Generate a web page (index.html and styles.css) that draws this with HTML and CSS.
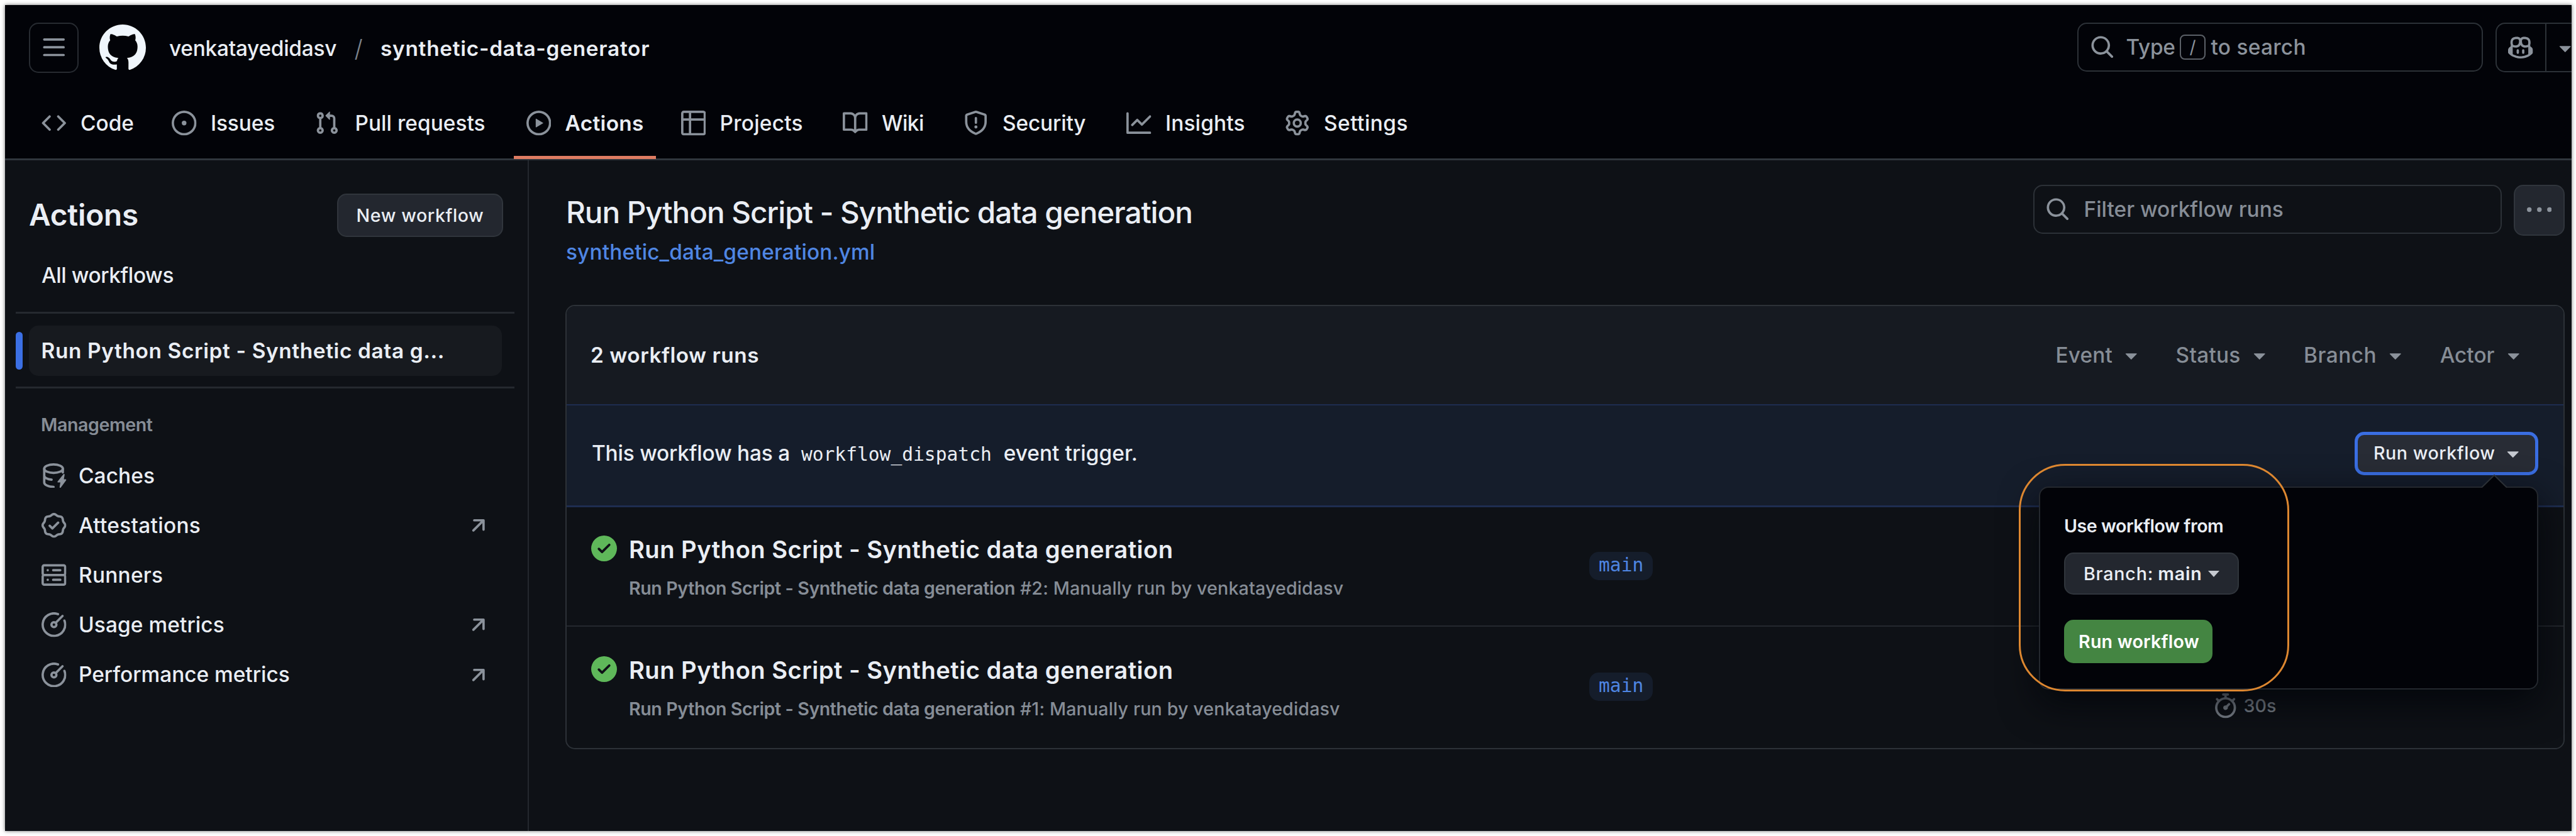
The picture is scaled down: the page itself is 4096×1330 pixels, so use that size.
FILE: index.html
```
<!DOCTYPE html>
<html lang="en">
<head>
<meta charset="utf-8">
<title>Workflow runs · venkatayedidasv/synthetic-data-generator</title>
<link rel="stylesheet" href="styles.css">
</head>
<body>
<svg class="sprite" aria-hidden="true">
  <symbol id="i-bars" viewBox="0 0 16 16"><path d="M1 2.75A.75.75 0 0 1 1.75 2h12.5a.75.75 0 0 1 0 1.5H1.75A.75.75 0 0 1 1 2.75Zm0 5A.75.75 0 0 1 1.75 7h12.5a.75.75 0 0 1 0 1.5H1.75A.75.75 0 0 1 1 7.75ZM1.75 12h12.5a.75.75 0 0 1 0 1.5H1.75a.75.75 0 0 1 0-1.5Z"/></symbol>
  <symbol id="i-mark" viewBox="0 0 16 16"><path d="M8 0c4.42 0 8 3.58 8 8a8.013 8.013 0 0 1-5.45 7.59c-.4.08-.55-.17-.55-.38 0-.27.01-1.13.01-2.2 0-.75-.25-1.23-.54-1.48 1.78-.2 3.65-.88 3.65-3.95 0-.88-.31-1.59-.82-2.15.08-.2.36-1.02-.08-2.12 0 0-.67-.22-2.2.82-.64-.18-1.32-.27-2-.27-.68 0-1.36.09-2 .27-1.53-1.03-2.2-.82-2.2-.82-.44 1.1-.16 1.92-.08 2.12-.51.56-.82 1.28-.82 2.15 0 3.06 1.86 3.75 3.64 3.95-.23.2-.44.55-.51 1.07-.46.21-1.61.55-2.33-.66-.15-.24-.6-.83-1.23-.82-.67.01-.27.38.01.53.34.19.73.9.82 1.13.16.45.68 1.31 2.69.94 0 .67.01 1.3.01 1.49 0 .21-.15.45-.55.38A7.995 7.995 0 0 1 0 8c0-4.42 3.58-8 8-8Z"/></symbol>
  <symbol id="i-search" viewBox="0 0 16 16"><path d="M10.68 11.74a6 6 0 0 1-7.922-8.982 6 6 0 0 1 8.982 7.922l3.04 3.04a.749.749 0 0 1-.326 1.275.749.749 0 0 1-.734-.215ZM11.5 7a4.499 4.499 0 1 0-8.997 0A4.499 4.499 0 0 0 11.5 7Z"/></symbol>
  <symbol id="i-copilot" viewBox="0 0 16 16"><path d="M7.998 15.035c-4.562 0-7.873-2.914-7.998-3.749V9.338c.085-.628.677-1.686 1.588-2.065.013-.07.024-.143.036-.218.029-.183.06-.384.126-.612-.201-.508-.254-1.084-.254-1.656 0-.87.128-1.769.693-2.484.579-.733 1.494-1.124 2.724-1.261 1.206-.134 2.262.034 2.944.765.05.053.096.108.139.165.044-.057.094-.112.143-.165.682-.731 1.738-.899 2.944-.765 1.23.137 2.145.528 2.724 1.261.566.715.693 1.614.693 2.484 0 .572-.053 1.148-.254 1.656.066.228.098.429.126.612.012.076.024.148.037.218.924.385 1.522 1.471 1.591 2.095v1.872c0 .766-3.351 3.795-8.002 3.795Zm0-1.485c2.28 0 4.584-1.11 5.002-1.433V7.862l-.023-.116c-.49.21-1.075.291-1.727.291-1.146 0-2.059-.327-2.71-.991A3.222 3.222 0 0 1 8 6.303a3.24 3.24 0 0 1-.544.743c-.65.664-1.563.991-2.71.991-.652 0-1.236-.081-1.727-.291l-.023.116v4.255c.419.323 2.722 1.433 5.002 1.433ZM6.762 2.83c-.193-.206-.637-.413-1.682-.297-1.019.113-1.479.404-1.713.7-.247.312-.369.789-.369 1.554 0 .793.129 1.171.308 1.371.162.181.519.379 1.442.379.853 0 1.339-.235 1.638-.54.315-.322.527-.827.617-1.553.117-.935-.037-1.395-.241-1.614Zm4.155-.297c-1.044-.116-1.488.091-1.681.297-.204.219-.359.679-.242 1.614.091.726.303 1.231.618 1.553.299.305.784.54 1.638.54.922 0 1.28-.198 1.442-.379.179-.2.308-.578.308-1.371 0-.765-.123-1.242-.37-1.554-.233-.296-.693-.587-1.713-.7ZM6.25 9.037a.75.75 0 0 1 .75.75v1.501a.75.75 0 0 1-1.5 0V9.787a.75.75 0 0 1 .75-.75Zm4.25.75v1.501a.75.75 0 0 1-1.5 0V9.787a.75.75 0 0 1 1.5 0Z"/></symbol>
  <symbol id="i-caret" viewBox="0 0 16 16"><path d="m4.427 7.427 3.396 3.396a.25.25 0 0 0 .354 0l3.396-3.396A.25.25 0 0 0 11.396 7H4.604a.25.25 0 0 0-.177.427Z"/></symbol>
  <symbol id="i-code" viewBox="0 0 16 16"><path d="m11.28 3.22 4.25 4.25a.75.75 0 0 1 0 1.06l-4.25 4.25a.749.749 0 0 1-1.275-.326.749.749 0 0 1 .215-.734L13.94 8l-3.72-3.72a.749.749 0 0 1 .326-1.275.749.749 0 0 1 .734.215Zm-6.56 0a.751.751 0 0 1 1.042.018.751.751 0 0 1 .018 1.042L2.06 8l3.72 3.72a.749.749 0 0 1-.326 1.275.749.749 0 0 1-.734-.215L.47 8.53a.75.75 0 0 1 0-1.06Z"/></symbol>
  <symbol id="i-issue" viewBox="0 0 16 16"><path d="M8 9.5a1.5 1.5 0 1 0 0-3 1.5 1.5 0 0 0 0 3Z"/><path d="M8 0a8 8 0 1 1 0 16A8 8 0 0 1 8 0ZM1.5 8a6.5 6.5 0 1 0 13 0 6.5 6.5 0 0 0-13 0Z"/></symbol>
  <symbol id="i-pull" viewBox="0 0 16 16"><path d="M1.5 3.25a2.25 2.25 0 1 1 3 2.122v5.256a2.251 2.251 0 1 1-1.5 0V5.372A2.25 2.25 0 0 1 1.5 3.25Zm5.677-.177L9.573.677A.25.25 0 0 1 10 .854V2.5h1A2.5 2.5 0 0 1 13.5 5v5.628a2.251 2.251 0 1 1-1.5 0V5a1 1 0 0 0-1-1h-1v1.646a.25.25 0 0 1-.427.177L7.177 3.427a.25.25 0 0 1 0-.354ZM3.75 2.5a.75.75 0 1 0 0 1.5.75.75 0 0 0 0-1.5Zm0 9.5a.75.75 0 1 0 0 1.5.75.75 0 0 0 0-1.5Zm8.25.75a.75.75 0 1 0 1.5 0 .75.75 0 0 0-1.5 0Z"/></symbol>
  <symbol id="i-play" viewBox="0 0 16 16"><path d="M8 0a8 8 0 1 1 0 16A8 8 0 0 1 8 0ZM1.5 8a6.5 6.5 0 1 0 13 0 6.5 6.5 0 0 0-13 0Zm4.879-2.773 4.264 2.559a.25.25 0 0 1 0 .428l-4.264 2.559A.25.25 0 0 1 6 10.559V5.442a.25.25 0 0 1 .379-.215Z"/></symbol>
  <symbol id="i-table" viewBox="0 0 16 16"><path d="M0 1.75C0 .784.784 0 1.75 0h12.5C15.216 0 16 .784 16 1.75v12.5A1.75 1.75 0 0 1 14.25 16H1.75A1.75 1.75 0 0 1 0 14.25ZM6.5 6.5v8h7.75a.25.25 0 0 0 .25-.25V6.5Zm8-1.5V1.75a.25.25 0 0 0-.25-.25H6.5V5Zm-13 1.5v7.75c0 .138.112.25.25.25H5v-8ZM5 5V1.5H1.75a.25.25 0 0 0-.25.25V5Z"/></symbol>
  <symbol id="i-book" viewBox="0 0 16 16"><path d="M0 1.75A.75.75 0 0 1 .75 1h4.253c1.227 0 2.317.59 3 1.501A3.743 3.743 0 0 1 11.006 1h4.245a.75.75 0 0 1 .75.75v10.5a.75.75 0 0 1-.75.75h-4.507a2.25 2.25 0 0 0-1.591.659l-.622.621a.75.75 0 0 1-1.06 0l-.622-.621A2.25 2.25 0 0 0 5.258 13H.75a.75.75 0 0 1-.75-.75Zm7.251 10.324.004-5.073-.002-2.253A2.25 2.25 0 0 0 5.003 2.5H1.5v9h3.757a3.75 3.75 0 0 1 1.994.574ZM8.755 4.75l-.004 7.322a3.752 3.752 0 0 1 1.992-.572H14.5v-9h-3.495a2.25 2.25 0 0 0-2.25 2.25Z"/></symbol>
  <symbol id="i-shield" viewBox="0 0 16 16"><path d="M7.467.133a1.748 1.748 0 0 1 1.066 0l5.25 1.68A1.75 1.75 0 0 1 15 3.48V7c0 1.566-.32 3.182-1.303 4.682-.983 1.498-2.585 2.813-5.032 3.855a1.697 1.697 0 0 1-1.33 0c-2.447-1.042-4.049-2.357-5.032-3.855C1.32 10.182 1 8.566 1 7V3.48a1.75 1.75 0 0 1 1.217-1.667Zm.61 1.429a.25.25 0 0 0-.153 0l-5.25 1.68a.25.25 0 0 0-.174.238V7c0 1.358.275 2.666 1.057 3.86.784 1.194 2.121 2.34 4.366 3.297a.196.196 0 0 0 .154 0c2.245-.956 3.582-2.104 4.366-3.298C13.225 9.666 13.5 8.36 13.5 7V3.48a.251.251 0 0 0-.174-.237l-5.25-1.68ZM8.75 4.75v3a.75.75 0 0 1-1.5 0v-3a.75.75 0 0 1 1.5 0ZM9 10.5a1 1 0 1 1-2 0 1 1 0 0 1 2 0Z"/></symbol>
  <symbol id="i-graph" viewBox="0 0 16 16"><path d="M1.5 1.75V13.5h13.75a.75.75 0 0 1 0 1.5H.75a.75.75 0 0 1-.75-.75V1.75a.75.75 0 0 1 1.5 0Zm14.28 2.53-5.25 5.25a.75.75 0 0 1-1.06 0L7 7.06 4.28 9.78a.751.751 0 0 1-1.042-.018.751.751 0 0 1-.018-1.042l3.25-3.25a.75.75 0 0 1 1.06 0L10 7.94l4.72-4.72a.751.751 0 0 1 1.042.018.751.751 0 0 1 .018 1.042Z"/></symbol>
  <symbol id="i-gear" viewBox="0 0 16 16"><path d="M8 0a8.2 8.2 0 0 1 .701.031C9.444.095 9.99.645 10.16 1.29l.288 1.107c.018.066.079.158.212.224.231.114.454.243.668.386.123.082.233.09.299.071l1.103-.303c.644-.176 1.392.021 1.82.63.27.385.506.792.704 1.218.315.675.111 1.422-.364 1.891l-.814.806c-.049.048-.098.147-.088.294.016.257.016.515 0 .772-.01.147.038.246.088.294l.814.806c.475.469.679 1.216.364 1.891a7.977 7.977 0 0 1-.704 1.217c-.428.61-1.176.807-1.82.63l-1.102-.302c-.067-.019-.177-.011-.3.071a5.909 5.909 0 0 1-.668.386c-.133.066-.194.158-.211.224l-.29 1.106c-.168.646-.715 1.196-1.458 1.26a8.006 8.006 0 0 1-1.402 0c-.743-.064-1.289-.614-1.458-1.26l-.289-1.106c-.018-.066-.079-.158-.212-.224a5.738 5.738 0 0 1-.668-.386c-.123-.082-.233-.09-.299-.071l-1.103.303c-.644.176-1.392-.021-1.82-.63a8.12 8.12 0 0 1-.704-1.218c-.315-.675-.111-1.422.363-1.891l.815-.806c.05-.048.098-.147.088-.294a6.214 6.214 0 0 1 0-.772c.01-.147-.038-.246-.088-.294l-.815-.806C.635 6.045.431 5.298.746 4.623a7.92 7.92 0 0 1 .704-1.217c.428-.61 1.176-.807 1.82-.63l1.102.302c.067.019.177.011.3-.071.214-.143.437-.272.668-.386.133-.066.194-.158.211-.224l.29-1.106C6.009.645 6.556.095 7.299.03 7.53.01 7.764 0 8 0Zm-.571 1.525c-.036.003-.108.036-.137.146l-.289 1.105c-.147.561-.549.967-.998 1.189-.173.086-.34.183-.5.29-.417.278-.97.423-1.529.27l-1.103-.303c-.109-.03-.175.016-.195.045-.22.312-.412.644-.573.99-.014.031-.021.11.059.19l.815.806c.411.406.562.957.53 1.456a4.709 4.709 0 0 0 0 .582c.032.499-.119 1.05-.53 1.456l-.815.806c-.081.08-.073.159-.059.19.162.346.353.677.573.989.02.03.085.076.195.046l1.102-.303c.56-.153 1.113-.008 1.53.27.161.107.328.204.501.29.447.222.85.629.997 1.189l.289 1.105c.029.109.101.143.137.146a6.6 6.6 0 0 0 1.142 0c.036-.003.108-.036.137-.146l.289-1.105c.147-.561.549-.967.998-1.189.173-.086.34-.183.5-.29.417-.278.97-.423 1.529-.27l1.103.303c.109.029.175-.016.195-.045.22-.313.411-.644.573-.99.014-.031.021-.11-.059-.19l-.815-.806c-.411-.406-.562-.957-.53-1.456a4.709 4.709 0 0 0 0-.582c-.032-.499.119-1.05.53-1.456l.815-.806c.081-.08.073-.159.059-.19a6.464 6.464 0 0 0-.573-.989c-.02-.03-.085-.076-.195-.046l-1.102.303c-.56.153-1.113.008-1.53-.27a4.44 4.44 0 0 0-.501-.29c-.447-.222-.85-.629-.997-1.189l-.289-1.105c-.029-.11-.101-.143-.137-.146a6.6 6.6 0 0 0-1.142 0ZM11 8a3 3 0 1 1-6 0 3 3 0 0 1 6 0ZM9.5 8a1.5 1.5 0 1 0-3.001.001A1.5 1.5 0 0 0 9.5 8Z"/></symbol>
  <symbol id="i-cache" viewBox="0 0 16 16"><g fill="none" stroke="currentColor" stroke-width="1.5" stroke-linecap="round"><ellipse cx="7.75" cy="3.5" rx="6" ry="2.75"/><path d="M1.75 3.5v9c0 1.4 2.6 2.6 6 2.75M1.75 8c0 1.2 2 2.3 4.75 2.6M13.75 3.5v2.4"/></g><path d="M14.1 7.1c.3-.35.85-.1.78.37L14.4 10.3h1.2c.35 0 .52.4.3.66l-3.5 4.75c-.28.36-.83.1-.77-.35l.5-3h-1.45a.4.4 0 0 1-.3-.66Z"/></symbol>
  <symbol id="i-verified" viewBox="0 0 16 16"><path d="m9.585.52.929.68c.153.112.331.186.518.215l1.138.175a2.678 2.678 0 0 1 2.24 2.24l.174 1.139c.029.187.103.365.215.518l.68.928a2.677 2.677 0 0 1 0 3.17l-.68.928a1.174 1.174 0 0 0-.215.518l-.175 1.138a2.678 2.678 0 0 1-2.241 2.241l-1.138.175a1.17 1.17 0 0 0-.518.215l-.928.68a2.677 2.677 0 0 1-3.17 0l-.928-.68a1.174 1.174 0 0 0-.518-.215L3.83 14.41a2.678 2.678 0 0 1-2.24-2.24l-.175-1.138a1.17 1.17 0 0 0-.215-.518l-.68-.928a2.677 2.677 0 0 1 0-3.17l.68-.928c.112-.153.186-.331.215-.518l.175-1.14a2.678 2.678 0 0 1 2.24-2.24l1.139-.175c.187-.029.365-.103.518-.215l.928-.68a2.677 2.677 0 0 1 3.17 0ZM7.303 1.728l-.927.68a2.67 2.67 0 0 1-1.18.489l-1.137.174a1.179 1.179 0 0 0-.987.987l-.174 1.136a2.677 2.677 0 0 1-.489 1.18l-.68.928a1.18 1.18 0 0 0 0 1.394l.68.927c.256.348.424.753.489 1.18l.174 1.137c.078.509.478.909.987.987l1.136.174a2.67 2.67 0 0 1 1.18.489l.928.68c.414.305.979.305 1.394 0l.927-.68a2.67 2.67 0 0 1 1.18-.489l1.137-.174a1.18 1.18 0 0 0 .987-.987l.174-1.136a2.67 2.67 0 0 1 .489-1.18l.68-.928a1.176 1.176 0 0 0 0-1.394l-.68-.927a2.686 2.686 0 0 1-.489-1.18l-.174-1.137a1.179 1.179 0 0 0-.987-.987l-1.136-.174a2.677 2.677 0 0 1-1.18-.489l-.928-.68a1.176 1.176 0 0 0-1.394 0ZM11.28 6.78l-3.75 3.75a.75.75 0 0 1-1.06 0L4.72 8.78a.751.751 0 0 1 .018-1.042.751.751 0 0 1 1.042-.018L7 8.94l3.22-3.22a.751.751 0 0 1 1.042.018.751.751 0 0 1 .018 1.042Z"/></symbol>
  <symbol id="i-server" viewBox="0 0 16 16"><g fill="none" stroke="currentColor" stroke-width="1.5" stroke-linecap="round"><rect x=".75" y="1.75" width="14.5" height="6.25" rx="1"/><rect x=".75" y="8" width="14.5" height="6.25" rx="1"/><path d="M4 4.9h.01M7.5 4.9h4.6M4 11.1h.01M7.5 11.1h4.6"/></g></symbol>
  <symbol id="i-meter" viewBox="0 0 16 16"><g fill="none" stroke="currentColor" stroke-width="1.5" stroke-linecap="round"><path d="M10.6 1.23A7.25 7.25 0 1 0 14.78 5.4M9.2 6.8l4.3-4.4"/><circle cx="8" cy="8" r="1.6"/></g></symbol>
  <symbol id="i-arrow" viewBox="0 0 16 16"><path d="M4.53 4.75A.75.75 0 0 1 5.28 4h6.01a.75.75 0 0 1 .75.75v6.01a.75.75 0 0 1-1.5 0v-4.2l-5.26 5.261a.749.749 0 0 1-1.275-.326.749.749 0 0 1 .215-.734L9.48 5.5h-4.2a.75.75 0 0 1-.75-.75Z"/></symbol>
  <symbol id="i-kebab" viewBox="0 0 16 16"><path d="M8 9a1.5 1.5 0 1 0 0-3 1.5 1.5 0 0 0 0 3ZM1.5 9a1.5 1.5 0 1 0 0-3 1.5 1.5 0 0 0 0 3Zm13 0a1.5 1.5 0 1 0 0-3 1.5 1.5 0 0 0 0 3Z"/></symbol>
  <symbol id="i-check" viewBox="0 0 16 16"><path d="M8 16A8 8 0 1 1 8 0a8 8 0 0 1 0 16Zm3.78-9.72a.751.751 0 0 0-.018-1.042.751.751 0 0 0-1.042-.018L6.75 9.19 5.28 7.72a.751.751 0 0 0-1.042.018.751.751 0 0 0-.018 1.042l2 2a.75.75 0 0 0 1.06 0Z"/></symbol>
  <symbol id="i-stopwatch" viewBox="0 0 16 16"><path d="M5.75.75A.75.75 0 0 1 6.5 0h3a.75.75 0 0 1 0 1.5h-.75v1l-.001.041a6.724 6.724 0 0 1 3.464 1.435l.007-.006.75-.75a.749.749 0 0 1 1.275.326.749.749 0 0 1-.215.734l-.75.75-.006.007a6.75 6.75 0 1 1-10.548 0L2.72 5.03l-.75-.75a.751.751 0 0 1 .018-1.042.751.751 0 0 1 1.042-.018l.75.75.007.006A6.72 6.72 0 0 1 7.25 2.541V1.5H6.5a.75.75 0 0 1-.75-.75ZM8 14.5a5.25 5.25 0 1 0-.001-10.501A5.25 5.25 0 0 0 8 14.5Zm.389-6.7 1.33-1.33a.75.75 0 1 1 1.061 1.06L9.45 8.861A1.503 1.503 0 0 1 8 10.75a1.499 1.499 0 1 1 .389-2.95Z"/></symbol>
</svg>

<div class="app">
  <header class="header">
    <div class="topbar">
      <button class="menu-btn" aria-label="Open menu"><svg class="icon"><use href="#i-bars"/></svg></button>
      <svg class="logo"><use href="#i-mark"/></svg>
      <span class="owner">venkatayedidasv</span>
      <span class="slash">/</span>
      <span class="repo">synthetic-data-generator</span>
      <div class="search">
        <svg class="icon"><use href="#i-search"/></svg>
        <span class="type">Type</span><kbd>/</kbd><span class="to-search">to search</span>
      </div>
      <div class="copilot">
        <span class="copilot-main"><svg class="icon"><use href="#i-copilot"/></svg></span>
        <span class="copilot-more"><svg class="icon"><use href="#i-caret"/></svg></span>
      </div>
    </div>
    <nav class="tabs">
      <a class="tab t-code"><svg class="icon"><use href="#i-code"/></svg>Code</a>
      <a class="tab t-issues"><svg class="icon"><use href="#i-issue"/></svg>Issues</a>
      <a class="tab t-pulls"><svg class="icon"><use href="#i-pull"/></svg>Pull requests</a>
      <a class="tab t-actions current"><svg class="icon"><use href="#i-play"/></svg>Actions</a>
      <a class="tab t-projects"><svg class="icon"><use href="#i-table"/></svg>Projects</a>
      <a class="tab t-wiki"><svg class="icon"><use href="#i-book"/></svg>Wiki</a>
      <a class="tab t-security"><svg class="icon"><use href="#i-shield"/></svg>Security</a>
      <a class="tab t-insights"><svg class="icon"><use href="#i-graph"/></svg>Insights</a>
      <a class="tab t-settings"><svg class="icon"><use href="#i-gear"/></svg>Settings</a>
    </nav>
  </header>

  <div class="body">
    <aside class="sidebar">
      <div class="side-head">
        <h2>Actions</h2>
        <button class="btn new-workflow">New workflow</button>
      </div>
      <a class="all">All workflows</a>
      <hr>
      <div class="selected"><a>Run Python Script - Synthetic data g...</a></div>
      <hr>
      <h3>Management</h3>
      <ul class="manage">
        <li class="m-caches"><svg class="icon"><use href="#i-cache"/></svg><span>Caches</span></li>
        <li class="m-attest"><svg class="icon"><use href="#i-verified"/></svg><span>Attestations</span><svg class="icon go"><use href="#i-arrow"/></svg></li>
        <li class="m-runners"><svg class="icon"><use href="#i-server"/></svg><span>Runners</span></li>
        <li class="m-usage"><svg class="icon"><use href="#i-meter"/></svg><span>Usage metrics</span><svg class="icon go"><use href="#i-arrow"/></svg></li>
        <li class="m-perf"><svg class="icon"><use href="#i-meter"/></svg><span>Performance metrics</span><svg class="icon go"><use href="#i-arrow"/></svg></li>
      </ul>
    </aside>

    <main class="main">
      <div class="main-head">
        <div class="titles">
          <h1>Run Python Script - Synthetic data generation</h1>
          <a class="file">synthetic_data_generation.yml</a>
        </div>
        <div class="filter-input"><svg class="icon"><use href="#i-search"/></svg>Filter workflow runs</div>
        <button class="btn kebab" aria-label="Show options"><svg class="icon"><use href="#i-kebab"/></svg></button>
      </div>

      <section class="runs">
        <div class="runs-head">
          <strong>2 workflow runs</strong>
          <div class="filters">
            <span class="filter f-event">Event<svg class="icon"><use href="#i-caret"/></svg></span>
            <span class="filter f-status">Status<svg class="icon"><use href="#i-caret"/></svg></span>
            <span class="filter f-branch">Branch<svg class="icon"><use href="#i-caret"/></svg></span>
            <span class="filter f-actor">Actor<svg class="icon"><use href="#i-caret"/></svg></span>
          </div>
        </div>

        <div class="dispatch">
          <p><span class="d-start">This workflow has a</span> <code>workflow_dispatch</code> <span class="d-end">event trigger.</span></p>
          <button class="btn run-toggle">Run workflow<svg class="icon"><use href="#i-caret"/></svg></button>
          <div class="popover">
            <svg class="notch" viewBox="0 0 42 22"><path d="M0 22 21 1l21 21Z"/><path class="edge" d="M1 20.500 21 1l20 19.500"/></svg>
            <label>Use workflow from</label>
            <button class="btn branch-btn"><span class="b-label">Branch:</span><b>main</b><svg class="tri" viewBox="0 0 18 10"><path d="M0 0h18L9 10Z"/></svg></button>
            <button class="go-btn">Run workflow</button>
          </div>
        </div>

        <article class="run">
          <svg class="icon ok"><use href="#i-check"/></svg>
          <div>
            <h4>Run Python Script - Synthetic data generation</h4>
            <p><b>Run Python Script - Synthetic data generation</b> <span>#2: Manually run by venkatayedidasv</span></p>
          </div>
          <div class="ref"><span class="badge">main</span></div>
        </article>
        <article class="run second">
          <svg class="icon ok"><use href="#i-check"/></svg>
          <div>
            <h4>Run Python Script - Synthetic data generation</h4>
            <p><b>Run Python Script - Synthetic data generation</b> <span>#1: Manually run by venkatayedidasv</span></p>
          </div>
          <div class="ref"><span class="badge">main</span></div>
          <div class="duration"><svg class="icon"><use href="#i-stopwatch"/></svg>30s</div>
        </article>
      </section>
    </main>
  </div>

  <div class="callout"></div>
</div>
</body>
</html>
```
FILE: styles.css
```
* { box-sizing: border-box; }

body {
  margin: 0;
  width: 4096px;
  height: 1330px;
  overflow: hidden;
  background: #fff;
  font-family: Inter, "Liberation Sans", sans-serif;
  font-size: 33.4px;
  font-weight: 450;
  line-height: 50px;
  color: #eaeef4;
  white-space: nowrap;
}

h1, h2, h3, h4, p, ul { margin: 0; padding: 0; }
ul { list-style: none; }
button { font: inherit; color: inherit; margin: 0; padding: 0; background: none; border: 0; }

.sprite { display: none; }
.icon { width: 39.5px; height: 39.5px; flex: none; fill: currentColor; color: #8b929b; }

.app {
  position: relative;
  width: 4081px;
  height: 1314px;
  margin: 8px 7px 8px 8px;
  display: flex;
  flex-direction: column;
  background: #0e1116;
  overflow: hidden;
  box-shadow: 0 0 6px rgba(0, 0, 0, .55);
}

/* ---------- header ---------- */
.header { height: 247px; flex: none; background: #020308; border-bottom: 3px solid #30363d; }
.topbar { display: flex; align-items: flex-start; padding: 28px 0 0 38px; height: 108px; }
.menu-btn {
  width: 79px; height: 80px;
  display: flex; align-items: center; justify-content: center;
  border: 2px solid #272b31; border-radius: 15px;
}
.logo { width: 74px; height: 74px; margin: 3px 37px 0 33px; fill: #f0f6fc; flex: none; }
.owner, .slash, .repo { line-height: 50px; margin-top: 16px; }
.owner { width: 266px; letter-spacing: -.25px; }
.slash { width: 70px; text-align: center; color: #7d848d; font-weight: 300; font-size: 38px; }
.repo { font-weight: 600; letter-spacing: .73px; }
.search {
  width: 645px; height: 78px; margin-left: auto;
  display: flex; align-items: center;
  padding-left: 18px;
  border: 2px solid #2c3137; border-radius: 15px;
  color: #8b929b;
}
.type { margin-left: 18px; width: 85px; letter-spacing: -.27px; }
kbd {
  width: 41px; height: 40px; margin-right: 9px; padding-left: 1px;
  border: 2px solid #5b6067; border-radius: 8px;
  font: 400 28px/36px Inter, sans-serif; text-align: center;
}
.to-search { letter-spacing: .3px; }
.copilot {
  width: 121px; height: 79px; margin-left: 20px;
  display: flex; flex: none;
  border: 2px solid #2c3137; border-right: 0; border-radius: 15px 0 0 15px;
}
.copilot-main, .copilot-more { display: flex; align-items: center; flex: none; }
.copilot-main { width: 79px; padding-left: 18px; border-right: 2px solid #2c3137; }
.copilot-more { padding-left: 10px; }

.tabs {
  display: grid;
  grid-template-columns: 207px 226.500px 337px 246px 257.500px 192px 259px 252px auto;
  height: 112px; margin-top: 24px; padding-left: 58px;
  color: #eaeef4;
}
.tab { position: relative; display: flex; align-items: center; gap: 22.500px; }
.tab.current { font-weight: 600; }
.tab.current::after {
  content: ""; position: absolute; left: -20px; bottom: -1px;
  width: 226px; height: 5px; background: #de7b62;
}
.t-issues { letter-spacing: -.12px; }
.t-pulls { gap: 25.500px; letter-spacing: .05px; }
.t-actions { letter-spacing: .35px; }
.t-projects { letter-spacing: .26px; }
.t-wiki { letter-spacing: -.56px; }
.t-security { letter-spacing: -.14px; }
.t-insights { letter-spacing: .14px; }
.t-settings { letter-spacing: .48px; }

/* ---------- sidebar ---------- */
.body { display: flex; flex: 1; }
.sidebar { width: 833px; flex: none; border-right: 2px solid #24282e; padding: 53px 21px 0 17px; }
.side-head { display: flex; justify-content: space-between; align-items: center; height: 69px; padding: 0 18px 0 21px; }
.side-head h2 { margin-top: -1px; font-size: 47.700px; font-weight: 600; letter-spacing: -.2px; }
.btn {
  display: flex; align-items: center;
  background: #23272f; border: 2px solid #30353c; border-radius: 15px;
  font-size: 28.600px; font-weight: 500;
}
.new-workflow { width: 264px; height: 69px; justify-content: center; letter-spacing: .58px; }
.all { display: block; margin-top: 22px; height: 79px; line-height: 79px; padding-left: 41px; letter-spacing: -.4px; }
hr { height: 3px; margin: 18px 0; border: 0; background: #25292f; }
.selected { position: relative; padding: 1px 20px 0 21px; }
.selected a {
  display: block; height: 80px; line-height: 81px; padding-left: 19.500px;
  border-radius: 15px; background: #171a1f;
  font-weight: 600; letter-spacing: .62px;
}
.selected::before {
  content: ""; position: absolute; left: 0; top: 11px;
  width: 11px; height: 60px; border-radius: 6px; background: #3b6fe4;
}
.selected + hr { margin: 17px 0 0; }
.sidebar h3 { margin-top: 28px; height: 60px; padding-left: 40px; font-size: 28.600px; line-height: 60px; font-weight: 600; letter-spacing: -.43px; color: #868d96; }
.manage { padding: 11px 38px 0 41px; }
.manage li { display: flex; align-items: center; height: 79.200px; gap: 19.500px; }
.manage .go { margin-left: auto; }
.m-caches { letter-spacing: .1px; }
.m-attest { letter-spacing: .3px; }
.m-runners { letter-spacing: .25px; }
.m-usage { letter-spacing: .1px; }
.m-perf { letter-spacing: 0; }

/* ---------- main ---------- */
.main { flex: 1; padding: 39px 11px 0 58px; }
.main-head { display: flex; height: 191px; align-items: flex-start; }
.titles { flex: 1; padding-top: 14px; }
h1 { padding-left: 1px; font-size: 47.700px; line-height: 60px; font-weight: 450; letter-spacing: -1.07px; }
.file { display: block; margin-top: 8px; padding-left: 1px; color: #4f86e3; letter-spacing: .13px; }
.filter-input {
  width: 745px; height: 78px; display: flex; align-items: center; gap: 22px; padding-left: 17px;
  border: 2px solid #2c3137; border-radius: 15px; color: #868d96; letter-spacing: 0;
}
.kebab { width: 81px; height: 81px; margin-left: 19px; justify-content: center; }

.runs { border: 2px solid #2c3137; border-radius: 15px; height: 707px; }
.runs-head {
  display: flex; align-items: center; justify-content: space-between;
  height: 156px; padding: 0 60px 0 38px;
  background: #161a21; border-radius: 13px 13px 0 0;
}
.runs-head strong { font-weight: 600; letter-spacing: .52px; }
.filters { display: flex; gap: 51px; color: #868d96; }
.filter { display: flex; align-items: center; gap: 10px; }
.f-event { letter-spacing: .15px; }
.f-status { letter-spacing: .25px; }
.f-branch { letter-spacing: .5px; }

.dispatch {
  position: relative;
  display: flex; align-items: center; justify-content: space-between;
  height: 164px; padding: 0 40px 7px 40px;
  background: #151d2b; border: solid #1e2d50; border-width: 2px 0 3px;
}
.d-start { letter-spacing: -.2px; }
code { margin: 0 10px 0 9px; font: 29.600px "DejaVu Sans Mono", monospace; }
.d-end { letter-spacing: .05px; }
.run-toggle {
  width: 292px; height: 69px; padding-left: 25px; gap: 8.500px;
  background: #282c35; border: 5px solid #3a6ee2;
  letter-spacing: .53px;
}
.run-toggle .icon { color: #c5c9d0; }

.popover {
  position: absolute; right: 40px; top: 129px; z-index: 2;
  width: 794px; height: 323px; padding: 39px 38px;
  background: #020308; border: 2px solid #24282e; border-radius: 15px;
  box-shadow: 0 20px 60px rgba(1, 4, 9, .8);
}
.notch { position: absolute; right: 47px; top: -21px; width: 42px; height: 22px; fill: #020308; }
.notch .edge { fill: none; stroke: #2b3036; stroke-width: 2; }
.popover label { display: block; font-size: 28.600px; font-weight: 600; line-height: 44px; letter-spacing: -.49px; }
.branch-btn { width: 278px; height: 67px; margin-top: 20px; padding-left: 29px; letter-spacing: .8px; }
.branch-btn b { font-weight: 600; margin-left: 7px; }
.tri { width: 18px; height: 10px; margin-left: 10px; fill: #c5c9d0; }
.go-btn {
  display: block; width: 236px; height: 69px; margin-top: 40px; padding-left: 2px;
  border-radius: 15px; background: #448542; color: #fff;
  font-size: 28.600px; font-weight: 600; line-height: 67px; letter-spacing: .2px;
}

.run {
  display: grid; grid-template-columns: 60px 1527px 992px auto;
  height: 190px; padding: 39px 0 0 39px; border-bottom: 2px solid #24282e;
}
.run.second { padding-top: 41px; border-bottom: 0; }
.run .ok { margin-top: 6px; width: 41px; height: 41px; color: #5fb85a; }
.run h4 { font-size: 38.200px; line-height: 56px; font-weight: 600; letter-spacing: .46px; }
.run p { margin-top: 14px; font-size: 28.600px; line-height: 40px; letter-spacing: .15px; color: #868d96; }
.run p b { font-weight: 600; letter-spacing: -.41px; }
.ref { padding-top: 32px; }
.badge {
  display: block; width: 101px; height: 45px; padding: 0 15px; border-radius: 15px;
  background: #151d2b; color: #4f86e3;
  font: 29.600px/43px "DejaVu Sans Mono", monospace;
}
.duration { display: flex; align-items: center; gap: 9px; height: 40px; margin-top: 65px; font-size: 28.600px; color: #7d848d; }
.duration .icon { color: #7d848d; }

.callout {
  position: absolute; left: 3201.500px; top: 730px; z-index: 3;
  width: 430px; height: 362px;
  border: 3px solid #dd8730; border-radius: 74px;
}
```
